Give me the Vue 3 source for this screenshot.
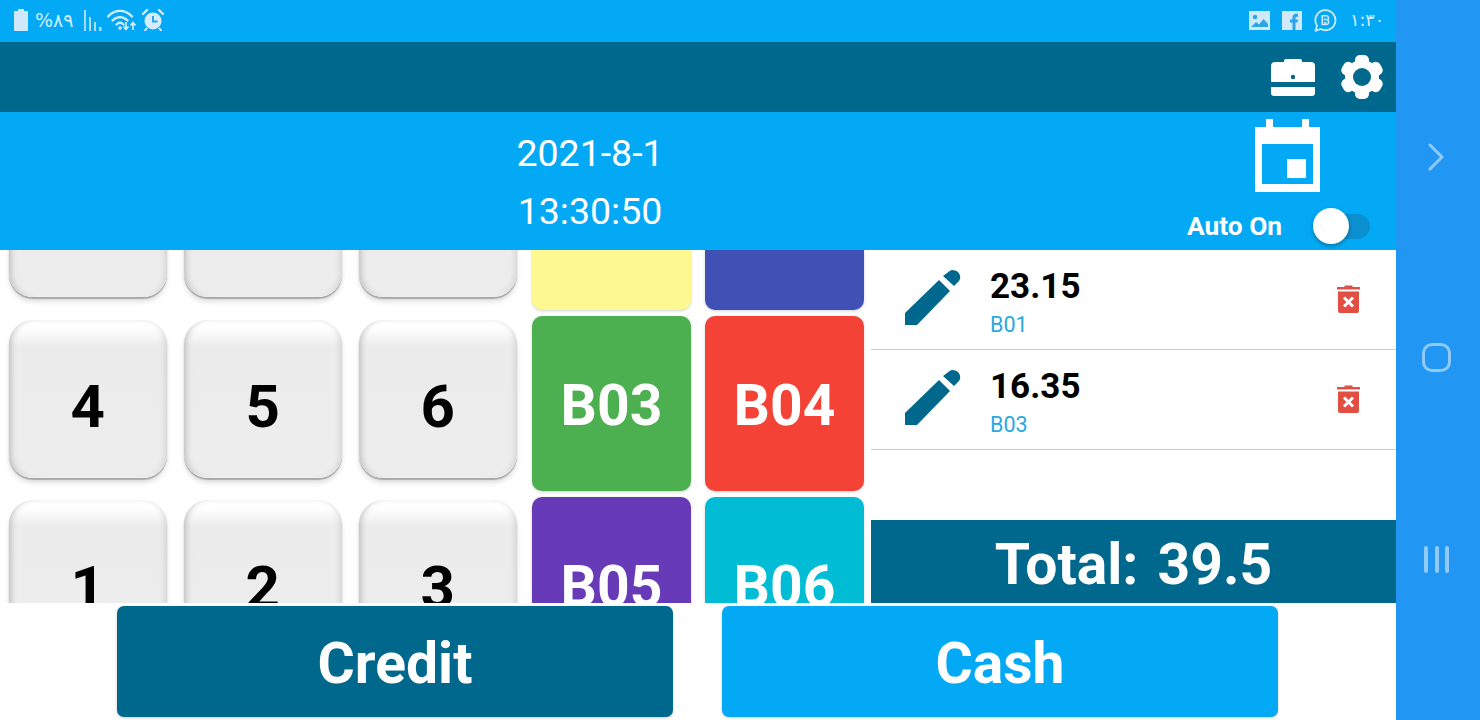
<script setup>
import { ref } from "vue";

const autoOn = ref(true);

const keys = ["7", "8", "9", "4", "5", "6", "1", "2", "3"];

const bays = [
  { name: "B01", color: "#fdf88f", label: "" },
  { name: "B02", color: "#3f51b5", label: "" },
  { name: "B03", color: "#4caf50", label: "B03" },
  { name: "B04", color: "#f44336", label: "B04" },
  { name: "B05", color: "#673ab7", label: "B05" },
  { name: "B06", color: "#00bcd4", label: "B06" }
];

const items = [
  { amount: "23.15", bay: "B01" },
  { amount: "16.35", bay: "B03" }
];
</script>

<template>
  <div class="screen">
    <div class="app">
      <div class="status">
        <div class="status-left">
          <svg class="ic-battery" width="14" height="22" viewBox="0 0 14 22"><path d="M4 0h6v2h3a1 1 0 0 1 1 1v18a1 1 0 0 1-1 1H1a1 1 0 0 1-1-1V3a1 1 0 0 1 1-1h3z" fill="#cfe9fb"/></svg>
          <span class="status-text pct">%۸۹</span>
          <svg class="ic-signal" width="18" height="21" viewBox="0 0 18 21"><g fill="#a9dcf9"><rect x="0" y="0" width="2" height="21"/><rect x="5" y="7" width="2" height="14"/><rect x="10" y="12" width="2" height="9"/><rect x="15" y="17" width="2.5" height="4"/></g></svg>
          <svg class="ic-wifi" width="30" height="24" viewBox="0 0 30 24"><g fill="none" stroke="#d5ecfb" stroke-width="2.2" stroke-linecap="round"><path d="M1 8.5C8 1 18 1 25 8.5"/><path d="M5.5 12.5c4.500-4.500 10.500-4.500 15 0"/><path d="M9.500 16.500c2.500-2.500 4.500-2.500 7 0"/></g><circle cx="13" cy="20" r="1.800" fill="#d5ecfb"/><path d="M19 14v7m-2.500-2.500 2.500 3 2.500-3M26 22v-7m-2.500 2.500 2.500-3 2.500 3" fill="none" stroke="#d5ecfb" stroke-width="1.600"/></svg>
          <svg class="ic-alarm" width="22" height="22" viewBox="0 0 22 22"><circle cx="11" cy="12" r="8.500" fill="#d5ecfb"/><path d="M11 7v5.500h4.500" fill="none" stroke="#2aa5e8" stroke-width="2"/><path d="M1 5l4-4M21 5l-4-4" stroke="#d5ecfb" stroke-width="2.400" stroke-linecap="round"/><path d="M4.500 19.500 3 21.500M17.500 19.500 19 21.500" stroke="#d5ecfb" stroke-width="2" stroke-linecap="round"/></svg>
        </div>
        <div class="status-right">
          <svg width="21" height="19" viewBox="0 0 21 19"><path d="M0 0h21v19H0z" fill="#cfe9fb"/><circle cx="6" cy="6" r="2.200" fill="#2aa5e8"/><path d="M2 16l5-5 3 2.500 4.500-5.500L19 13v3z" fill="#2aa5e8"/></svg>
          <svg class="ic-fb" width="20" height="19" viewBox="0 0 20 19"><path d="M0 0h20v19H0z" fill="#cfe9fb"/><path d="M10.500 19v-7.500H8V8.500h2.500V6.500C10.500 4 12 2.800 14 2.800h2v3h-1.500c-.8 0-1 .4-1 1.100v1.600H16l-.5 3h-2V19z" fill="#2aa5e8"/></svg>
          <svg class="ic-biz" width="23" height="23" viewBox="0 0 23 23"><path d="M11.500 1.200a10 10 0 1 1-4.800 18.800L1.500 21.800l1.600-5A10 10 0 0 1 11.500 1.200z" fill="none" stroke="#cfe9fb" stroke-width="1.800" stroke-linejoin="round"/><path d="M8.300 6.800h3.900a2.300 2.300 0 0 1 1.300 4.200 2.400 2.400 0 0 1-1 4.500H8.300zM10 10.400h2.100M10 13.800h2.400" fill="none" stroke="#cfe9fb" stroke-width="1.600"/></svg>
          <span class="status-text time">۱:۳۰</span>
        </div>
      </div>

      <div class="toolbar">
        <svg width="44" height="37" viewBox="0 0 44 37"><path d="M13 3V2a2 2 0 0 1 2-2h14a2 2 0 0 1 2 2v1h9a4 4 0 0 1 4 4v16H0V7a4 4 0 0 1 4-4z" fill="#fff"/><circle cx="22" cy="18" r="2.200" fill="#00678d"/><path d="M0 28h44v6a3 3 0 0 1-3 3H3a3 3 0 0 1-3-3z" fill="#fff"/></svg>
        <svg width="44" height="44" viewBox="0 0 44 44">
          <g fill="#fff">
            <circle cx="22" cy="22" r="17"/>
            <rect x="15" y="0" width="14" height="44" rx="5"/>
            <rect x="15" y="0" width="14" height="44" rx="5" transform="rotate(60 22 22)"/>
            <rect x="15" y="0" width="14" height="44" rx="5" transform="rotate(120 22 22)"/>
          </g>
          <circle cx="22" cy="22" r="9" fill="#00678d"/>
        </svg>
      </div>

      <div class="band">
        <div class="clock">
          <div>2021-8-1</div>
          <div>13:30:50</div>
        </div>
        <div class="auto">
          <svg width="65" height="73" viewBox="0 0 65 73"><path d="M11 0h7v8h29V0h7v8h11v65H0V8h11z" fill="#fff"/><path d="M7 25h51v40H7z" fill="#03a9f4"/><rect x="32" y="40" width="19" height="19" fill="#fff"/></svg>
          <div class="auto-row">
            <span class="auto-label">Auto On</span>
            <div class="switch" @click="autoOn = !autoOn">
              <div class="thumb" :class="{ off: !autoOn }"></div>
            </div>
          </div>
        </div>
      </div>

      <div class="work">
        <div class="keypad">
          <button v-for="k in keys" :key="k" class="key">{{ k === "7" || k === "8" || k === "9" ? "" : k }}</button>
        </div>

        <div class="bays">
          <div v-for="b in bays" :key="b.name" class="bay" :style="{ background: b.color }">{{ b.label }}</div>
        </div>

        <div class="ticket">
          <div class="rows">
            <div v-for="it in items" :key="it.bay" class="row">
              <svg class="pencil" width="56" height="56" viewBox="0 0 56 56"><path d="M0 43 34 10 45 21 12 55H0z" fill="#00678d"/><path d="M38 6 44 1.500a7 7 0 0 1 10 9.500L49 16z" fill="#00678d"/></svg>
              <div class="info">
                <div class="amount">{{ it.amount }}</div>
                <div class="bay-name">{{ it.bay }}</div>
              </div>
              <svg class="trash" width="23" height="29" viewBox="0 0 23 29"><path d="M0 3h7.500V1.500h8V3H23v2.500H0z" fill="#d9534a"/><path d="M1 7.500h21V27a2 2 0 0 1-2 2H3a2 2 0 0 1-2-2z" fill="#e04f41"/><path d="M7 13.500l9 9m0-9-9 9" stroke="#fff" stroke-width="3"/></svg>
            </div>
          </div>
          <div class="total">Total: 39.5</div>
        </div>
      </div>

      <div class="actions">
        <button class="pay credit">Credit</button>
        <button class="pay cash">Cash</button>
      </div>
    </div>

    <div class="nav">
      <svg width="17" height="28" viewBox="0 0 17 28"><path d="M2 2l12 12L2 26" fill="none" stroke="#90caf9" stroke-width="3" stroke-linecap="round" stroke-linejoin="round"/></svg>
      <div class="home"></div>
      <div class="recents"><span></span><span></span><span></span></div>
    </div>
  </div>
</template>

<style>
html, body {
  margin: 0;
  background: #fff;
}
</style>

<style scoped>
* {
  box-sizing: border-box;
}

.screen {
  display: flex;
  width: 1480px;
  height: 720px;
  overflow: hidden;
  font-family: Roboto, Arial, sans-serif;
}

.app {
  width: 1396px;
  display: flex;
  flex-direction: column;
  background: #fff;
}

.status {
  height: 42px;
  flex: none;
  background: #04a9f5;
  display: flex;
  justify-content: space-between;
  align-items: center;
  padding: 0 15px 2px 14px;
}
.status-left,
.status-right {
  display: flex;
  align-items: center;
}
.status-text {
  font-family: "DejaVu Sans", sans-serif;
  color: #d5ecfb;
  font-size: 18px;
  line-height: 22px;
}
.pct {
  margin-left: 7px;
  width: 49px;
  font-size: 19px;
}
.ic-wifi { margin-left: 5px; }
.ic-alarm { margin-left: 5px; }
.ic-fb { margin-left: 12px; }
.ic-biz { margin-left: 12px; }
.time {
  margin-left: 13px;
  width: 31px;
  white-space: nowrap;
  font-size: 17.5px;
}

.toolbar {
  height: 70px;
  flex: none;
  background: #00678d;
  display: flex;
  justify-content: flex-end;
  align-items: center;
  gap: 25px;
  padding: 0 12px 0 0;
}

.band {
  height: 138px;
  flex: none;
  background: #03a9f4;
  display: flex;
}
.clock {
  width: 1180px;
  text-align: center;
  color: #fff;
  font-size: 37.5px;
  line-height: 58px;
  padding-top: 12px;
}
.auto {
  flex: 1;
  display: flex;
  flex-direction: column;
  align-items: flex-start;
  padding-top: 7px;
}
.auto svg {
  margin-left: 75px;
}
.auto-row {
  display: flex;
  align-items: center;
  margin-top: 19px;
  margin-left: 7px;
}
.auto-label {
  color: #fff;
  font-size: 26.3px;
  line-height: 29px;
  font-weight: 700;
  width: 126px;
  padding-top: 1px;
}
.switch {
  position: relative;
  width: 57px;
  height: 25px;
  border-radius: 13px;
  background: #0b90cf;
  cursor: pointer;
}
.thumb {
  position: absolute;
  left: 0;
  top: -6px;
  width: 36px;
  height: 36px;
  border-radius: 50%;
  background: #fff;
  box-shadow: 0 2px 4px rgba(0, 0, 0, 0.3);
}
.thumb.off {
  left: 21px;
}

.work {
  height: 353px;
  flex: none;
  display: flex;
  overflow: hidden;
}

.keypad {
  width: 516.5px;
  flex: none;
  padding-left: 9px;
  margin-top: -111px;
  display: grid;
  grid-template-columns: repeat(3, 157.5px);
  grid-auto-rows: 158px;
  column-gap: 17.5px;
  row-gap: 22.5px;
}
.key {
  border: none;
  padding: 16px 0 0;
  border-radius: 24px;
  background: linear-gradient(#fff 0, #fff 8px, #ececec 26px, #ededed 100%);
  box-shadow: 0 2px 1px #a8a8a8, 0 5px 5px rgba(0, 0, 0, 0.12), inset 5px 0 7px -4px rgba(0, 0, 0, 0.26), inset -5px 0 7px -4px rgba(0, 0, 0, 0.14), inset 0 -3px 3px -2px #fff;
  font-family: Roboto, Arial, sans-serif;
  font-size: 60px;
  font-weight: 700;
  color: #000;
  cursor: pointer;
}

.bays {
  width: 349.5px;
  flex: none;
  padding-left: 15.5px;
  margin-top: -115px;
  display: grid;
  grid-template-columns: repeat(2, 159px);
  grid-auto-rows: 175px;
  column-gap: 14px;
  row-gap: 6px;
}
.bay {
  border-radius: 10px;
  color: #fff;
  font-size: 57px;
  font-weight: 700;
  display: flex;
  align-items: center;
  justify-content: center;
  padding-top: 4px;
  box-shadow: 0 1px 3px rgba(0, 0, 0, 0.18);
}

.ticket {
  margin-left: 5px;
  flex: 1;
  display: flex;
  flex-direction: column;
}
.rows {
  flex: 1;
}
.row {
  height: 100px;
  border-bottom: 1px solid #ccc;
  display: flex;
  align-items: center;
  padding: 0 36px 0 34px;
}
.pencil {
  flex: none;
  margin-top: -3px;
}
.info {
  flex: 1;
  margin-left: 29px;
  padding-top: 7px;
}
.amount {
  font-size: 35px;
  font-weight: 700;
  line-height: 40px;
  color: #000;
}
.bay-name {
  font-size: 21.5px;
  line-height: 30px;
  color: #29a9e0;
  margin-top: 3px;
}
.trash {
  flex: none;
  margin-top: -2px;
}
.total {
  height: 83px;
  flex: none;
  background: #00678d;
  color: #fff;
  font-size: 57px;
  font-weight: 700;
  word-spacing: 5px;
  text-align: center;
  line-height: 90px;
}

.actions {
  flex: 1;
  display: flex;
  gap: 49px;
  padding: 3px 0 3px 117px;
}
.pay {
  width: 556px;
  border: none;
  border-radius: 7px;
  color: #fff;
  font-family: Roboto, Arial, sans-serif;
  font-size: 57px;
  font-weight: 700;
  padding: 4px 0 0;
  box-shadow: 0 1px 3px rgba(0, 0, 0, 0.2);
  cursor: pointer;
}
.credit { background: #00678d; }
.cash { background: #03a9f4; }

.nav {
  flex: 1;
  background: #2196f3;
  display: flex;
  flex-direction: column;
  align-items: center;
  padding: 143px 3px 0 0;
}
.home {
  margin-top: 172px;
  width: 29px;
  height: 29px;
  border: 3px solid #90caf9;
  border-radius: 10px;
}
.recents {
  margin-top: 174px;
  display: flex;
  gap: 6.5px;
}
.recents span {
  width: 4px;
  height: 27px;
  border-radius: 2px;
  background: #90caf9;
}
</style>
